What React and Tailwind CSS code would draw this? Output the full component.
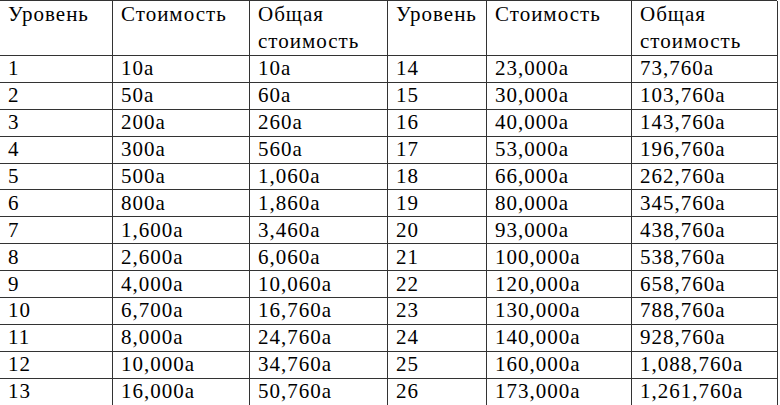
const rows = [
  ["1", "10a", "10a", "14", "23,000a", "73,760a"],
  ["2", "50a", "60a", "15", "30,000a", "103,760a"],
  ["3", "200a", "260a", "16", "40,000a", "143,760a"],
  ["4", "300a", "560a", "17", "53,000a", "196,760a"],
  ["5", "500a", "1,060a", "18", "66,000a", "262,760a"],
  ["6", "800a", "1,860a", "19", "80,000a", "345,760a"],
  ["7", "1,600a", "3,460a", "20", "93,000a", "438,760a"],
  ["8", "2,600a", "6,060a", "21", "100,000a", "538,760a"],
  ["9", "4,000a", "10,060a", "22", "120,000a", "658,760a"],
  ["10", "6,700a", "16,760a", "23", "130,000a", "788,760a"],
  ["11", "8,000a", "24,760a", "24", "140,000a", "928,760a"],
  ["12", "10,000a", "34,760a", "25", "160,000a", "1,088,760a"],
  ["13", "16,000a", "50,760a", "26", "173,000a", "1,261,760a"],
];

const headers = ["Уровень", "Стоимость", "Общая стоимость", "Уровень", "Стоимость", "Общая стоимость"];

const App = () => {
  return (
    <div className="w-[780px] h-[405px] bg-white overflow-hidden p-0">
      <div className="font-['Liberation_Serif'] text-[21px] tracking-[1px] text-black -ml-px w-[778px] grid grid-cols-[113px_137px_138px_99px_145px_146px] grid-rows-[55px_repeat(13,26.9px)] border-t border-l border-[#333]">
        {headers.map((h, i) => (
          <div key={"h" + i} className="border-r border-b border-[#333] pl-2 leading-[27px]">
            {h}
          </div>
        ))}
        {rows.map((r, ri) =>
          r.map((c, ci) => (
            <div
              key={ri + "-" + ci}
              className="border-r border-b border-[#333] pl-2 flex items-center leading-none"
            >
              {c}
            </div>
          ))
        )}
      </div>
    </div>
  );
};

export default App;
